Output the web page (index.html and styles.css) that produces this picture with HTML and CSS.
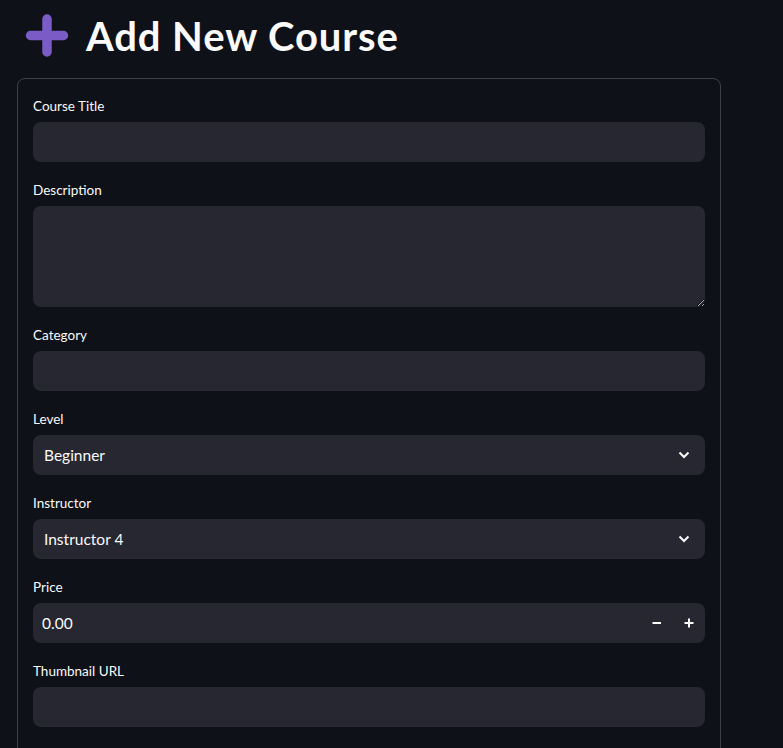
FILE: index.html
```html
<!DOCTYPE html>
<html lang="en">
<head>
<meta charset="utf-8">
<title>Add New Course</title>
<link rel="stylesheet" href="styles.css">
</head>
<body>
<main class="page">
  <h1 class="title">
    <svg class="title-icon" width="44" height="44" viewBox="0 0 44 44" aria-hidden="true">
      <path d="M22 5 V38 M5.5 21.5 H38.5" stroke="#7b5bc6" stroke-width="9.5" stroke-linecap="round" fill="none"/>
    </svg>
    <span>Add New Course</span>
  </h1>
  <form class="card">
    <div class="field">
      <label class="label" for="title">Course Title</label>
      <input class="control" id="title" type="text">
    </div>
    <div class="field">
      <label class="label" for="desc">Description</label>
      <textarea class="control area" id="desc"></textarea>
    </div>
    <div class="field">
      <label class="label" for="cat">Category</label>
      <input class="control" id="cat" type="text">
    </div>
    <div class="field">
      <span class="label">Level</span>
      <div class="control select">
        <span class="value">Beginner</span>
        <svg class="chev" width="12" height="8" viewBox="0 0 12 8" aria-hidden="true"><path d="M1.5 1.5 L6 6 L10.5 1.5" stroke="#fafafa" stroke-width="2" fill="none"/></svg>
      </div>
    </div>
    <div class="field">
      <span class="label">Instructor</span>
      <div class="control select">
        <span class="value">Instructor 4</span>
        <svg class="chev" width="12" height="8" viewBox="0 0 12 8" aria-hidden="true"><path d="M1.5 1.5 L6 6 L10.5 1.5" stroke="#fafafa" stroke-width="2" fill="none"/></svg>
      </div>
    </div>
    <div class="field">
      <span class="label">Price</span>
      <div class="control number">
        <span class="num-value">0.00</span>
        <span class="step"><svg width="10" height="10" viewBox="0 0 10 10" aria-hidden="true"><path d="M0.5 5 H9" stroke="#fafafa" stroke-width="2"/></svg></span>
        <span class="step"><svg width="10" height="10" viewBox="0 0 10 10" aria-hidden="true"><path d="M0.5 5 H9.5 M5 0.5 V9.5" stroke="#fafafa" stroke-width="2"/></svg></span>
      </div>
    </div>
    <div class="field">
      <label class="label" for="thumb">Thumbnail URL</label>
      <input class="control" id="thumb" type="text">
    </div>
  </form>
</main>
</body>
</html>
```
FILE: styles.css
```css
html, body {
  margin: 0;
  background: #0e1117;
  color: #fafafa;
  font-family: "Lato", "Liberation Sans", sans-serif;
  color-scheme: dark;
}

.page {
  padding: 0 17px;
}

.title {
  display: flex;
  align-items: center;
  gap: 17px;
  height: 78px;
  margin: 0;
  padding-left: 8px;
  box-sizing: border-box;
  font-size: 40px;
  font-weight: 700;
  letter-spacing: 0.9px;
  color: #fafafa;
}

.title-icon {
  flex: none;
  margin-top: -6px;
}

.title span {
  margin-top: -6px;
}

.card {
  width: 704px;
  box-sizing: border-box;
  border: 1px solid rgba(250, 250, 250, 0.2);
  border-radius: 8px;
  padding: 15px 15px 40px;
  display: flex;
  flex-direction: column;
  gap: 16px;
}

.field {
  display: flex;
  flex-direction: column;
}

.label {
  display: block;
  height: 24px;
  line-height: 24px;
  margin-bottom: 4px;
  font-size: 13.5px;
  color: #fafafa;
}

.control {
  display: block;
  box-sizing: border-box;
  width: 100%;
  height: 40px;
  margin: 0;
  border: none;
  border-radius: 8px;
  background: #262730;
  color: #fafafa;
  font-family: inherit;
  font-size: 15.5px;
  outline: none;
}

.area {
  height: 101px;
  resize: vertical;
  padding: 8px 11px;
}

.select {
  display: flex;
  align-items: center;
  justify-content: space-between;
  padding: 0 15px 0 11px;
}

.value {
  font-size: 15.5px;
}

.chev {
  display: block;
}

.number {
  display: flex;
  align-items: center;
  padding-left: 9px;
}

.num-value {
  flex: 1;
  font-size: 15.5px;
}

.step {
  width: 32px;
  height: 40px;
  display: flex;
  align-items: center;
  justify-content: center;
}

.step svg {
  display: block;
}
```
